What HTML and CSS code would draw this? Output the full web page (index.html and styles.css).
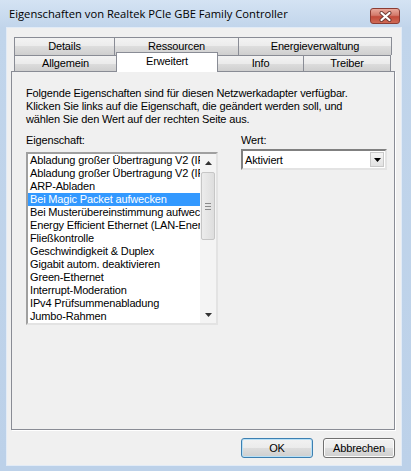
FILE: index.html
```html
<!DOCTYPE html>
<html lang="de">
<head>
    <meta charset="UTF-8">
    <title>Eigenschaften von Realtek PCIe GBE Family Controller</title>
    <link rel="stylesheet" href="styles.css">
</head>
<body>
    <div class="window">
        <div class="titlebar">
            <span class="title">Eigenschaften von Realtek PCIe GBE Family Controller</span>
            <div class="close-btn">
                <svg width="13" height="11" viewBox="0 0 13 11">
                    <path d="M2.5 2 L10.5 9 M10.5 2 L2.5 9" stroke="#6e3a34" stroke-width="4" stroke-linecap="round"/>
                    <path d="M2.5 2 L10.5 9 M10.5 2 L2.5 9" stroke="#ffffff" stroke-width="2.2" stroke-linecap="round"/>
                </svg>
            </div>
        </div>

        <div class="client">
            <div class="tabs">
                <div class="tab-row row-back">
                    <div class="tab tab-details">Details</div>
                    <div class="tab tab-ressourcen">Ressourcen</div>
                    <div class="tab tab-energie">Energieverwaltung</div>
                </div>
                <div class="tab-row row-front">
                    <div class="tab tab-allgemein">Allgemein</div>
                    <div class="tab tab-erweitert active">Erweitert</div>
                    <div class="tab tab-info">Info</div>
                    <div class="tab tab-treiber">Treiber</div>
                </div>
            </div>

            <div class="panel">
                <p class="intro">
                    Folgende Eigenschaften sind für diesen Netzwerkadapter verfügbar.<br>
                    Klicken Sie links auf die Eigenschaft, die geändert werden soll, und<br>
                    wählen Sie den Wert auf der rechten Seite aus.
                </p>

                <div class="fields">
                    <div class="field-prop">
                        <div class="label label-prop">Eigenschaft:</div>
                        <div class="listbox">
                            <ul class="items">
                                <li>Abladung großer Übertragung V2 (IPv4)</li>
                                <li>Abladung großer Übertragung V2 (IPv6)</li>
                                <li>ARP-Abladen</li>
                                <li class="selected">Bei Magic Packet aufwecken</li>
                                <li>Bei Musterübereinstimmung aufwecken</li>
                                <li>Energy Efficient Ethernet (LAN-Energiesparmodus)</li>
                                <li>Fließkontrolle</li>
                                <li>Geschwindigkeit &amp; Duplex</li>
                                <li>Gigabit autom. deaktivieren</li>
                                <li>Green-Ethernet</li>
                                <li>Interrupt-Moderation</li>
                                <li>IPv4 Prüfsummenabladung</li>
                                <li>Jumbo-Rahmen</li>
                            </ul>
                            <div class="scrollbar">
                                <div class="sb-arrow">
                                    <svg width="7" height="4" viewBox="0 0 7 4"><path d="M0 4 L3.5 0 L7 4 Z" fill="#333"/></svg>
                                </div>
                                <div class="sb-track">
                                    <div class="sb-thumb">
                                        <span class="grip"></span>
                                        <span class="grip"></span>
                                        <span class="grip"></span>
                                    </div>
                                </div>
                                <div class="sb-arrow">
                                    <svg width="7" height="4" viewBox="0 0 7 4"><path d="M0 0 L7 0 L3.5 4 Z" fill="#333"/></svg>
                                </div>
                            </div>
                        </div>
                    </div>

                    <div class="field-value">
                        <div class="label label-value">Wert:</div>
                        <div class="combo">
                            <span class="combo-text">Aktiviert</span>
                            <div class="combo-btn">
                                <svg width="7" height="4" viewBox="0 0 7 4"><path d="M0 0 L7 0 L3.5 4 Z" fill="#000"/></svg>
                            </div>
                        </div>
                    </div>
                </div>
            </div>

            <div class="buttons">
                <button class="btn btn-default">OK</button>
                <button class="btn">Abbrechen</button>
            </div>
        </div>
    </div>
</body>
</html>
```

FILE: styles.css
```css
* {
    margin: 0;
    padding: 0;
    box-sizing: border-box;
}

body {
    width: 411px;
    height: 471px;
    overflow: hidden;
    font-family: "Liberation Sans", Arial, sans-serif;
    font-size: 11px;
    letter-spacing: -0.15px;
    color: #000;
}

.window {
    width: 411px;
    height: 471px;
    display: flex;
    flex-direction: column;
    background: linear-gradient(to bottom, #d4e3f3 0, #c1d5eb 28px, #bcd1e9 100%);
}

/* title bar */

.titlebar {
    height: 28px;
    display: flex;
    align-items: center;
    justify-content: space-between;
    padding: 0 11px 0 9px;
}

.title {
    font-family: "Open Sans", sans-serif;
    font-size: 11.2px;
    letter-spacing: 0;
    color: #000;
    padding-bottom: 1px;
}

.close-btn {
    width: 30px;
    height: 16px;
    margin-top: 4px;
    border: 1px solid #8c3c33;
    border-radius: 3px;
    background: linear-gradient(to bottom, #e9a99c 0%, #d37a6b 45%, #c24a3a 55%, #cf6a55 100%);
    display: flex;
    align-items: center;
    justify-content: center;
}

/* client area */

.client {
    flex: 1;
    margin: 0 10px 6px 7px;
    background: #f0f0f0;
    box-shadow: 0 0 0 1px #e2ebf6;
    display: flex;
    flex-direction: column;
    padding: 9px 6px 7px 4px;
}

/* tabs */

.tabs {
    margin: 0 4px 0 3px;
}

.tab-row {
    display: flex;
}

.row-back {
    height: 18px;
}

.row-front {
    height: 16px;
}

.tab {
    border: 1px solid #898c95;
    border-bottom: none;
    margin-right: -1px;
    background: linear-gradient(to bottom, #f3f3f3 0%, #ebebeb 50%, #dddddd 50%, #cfcfcf 100%);
    text-align: center;
    line-height: 16px;
    white-space: nowrap;
}

.row-front .tab {
    line-height: 15px;
}

.tab-details { width: 101px; }
.tab-ressourcen { width: 125px; }
.tab-energie { width: 154px; }
.tab-allgemein { width: 103px; }
.tab-erweitert { width: 102px; }
.tab-info { width: 87px; }
.tab-treiber { width: 88px; }

.tab.active {
    position: relative;
    z-index: 1;
    height: 20px;
    margin-top: -3px;
    background: #fff;
    line-height: 16px;
}

/* panel */

.panel {
    flex: 1;
    border: 1px solid #898c95;
    box-shadow: 1px 1px 0 #fff;
    background: #f0f0f0;
    padding: 15px 7px 0 14px;
}

.intro {
    line-height: 13px;
}

.fields {
    display: grid;
    grid-template-columns: 192px 146px;
    column-gap: 23px;
    margin-top: 8px;
}

.label {
    line-height: 13px;
}

.label-prop {
    margin-bottom: 5px;
}

.label-value {
    margin-bottom: 2px;
}

/* list box */

.listbox {
    height: 173px;
    display: flex;
    background: #fff;
    border: 2px solid;
    border-color: #a0a0a0 #e3e3e3 #e3e3e3 #a0a0a0;
}

.items {
    flex: 1;
    list-style: none;
    overflow: hidden;
}

.items li {
    height: 13px;
    line-height: 13px;
    padding-left: 2px;
    white-space: nowrap;
    overflow: hidden;
}

.items li.selected {
    background: #3399ff;
    color: #fff;
}

.scrollbar {
    width: 16px;
    display: flex;
    flex-direction: column;
    background: #f4f4f4;
}

.sb-arrow {
    height: 17px;
    display: flex;
    align-items: center;
    justify-content: center;
}

.sb-track {
    flex: 1;
}

.sb-thumb {
    height: 68px;
    margin: 1px 1px 0 1px;
    border: 1px solid #c6c6c6;
    border-radius: 2px;
    background: linear-gradient(to right, #ececec, #dedede);
    display: flex;
    flex-direction: column;
    align-items: center;
    justify-content: center;
    gap: 2px;
}

.grip {
    width: 6px;
    height: 1px;
    background: #8a8a8a;
}

/* combo box */

.combo {
    height: 21px;
    display: flex;
    align-items: center;
    background: #fff;
    border: 2px solid;
    border-color: #808080 #e3e3e3 #e3e3e3 #808080;
}

.combo-text {
    flex: 1;
    padding-left: 2px;
}

.combo-btn {
    width: 14px;
    height: 15px;
    margin-right: 1px;
    background: linear-gradient(to bottom, #f4f4f4, #e2e2e2);
    border: 1px solid #c8c8c8;
    display: flex;
    align-items: center;
    justify-content: center;
}

/* buttons */

.buttons {
    display: flex;
    justify-content: flex-end;
    gap: 10px;
    margin-top: 8px;
}

.btn {
    width: 72px;
    height: 20px;
    font-family: "Liberation Sans", Arial, sans-serif;
    font-size: 11px;
    letter-spacing: -0.15px;
    color: #000;
    border: 1px solid #707070;
    border-radius: 3px;
    background: linear-gradient(to bottom, #f2f2f2 0%, #ebebeb 50%, #dddddd 50%, #cfcfcf 100%);
    box-shadow: inset 0 0 0 1px #fcfcfc;
}

.btn-default {
    border-color: #3c7fb1;
    box-shadow: inset 0 0 0 1px #b8e0f6;
}
```
